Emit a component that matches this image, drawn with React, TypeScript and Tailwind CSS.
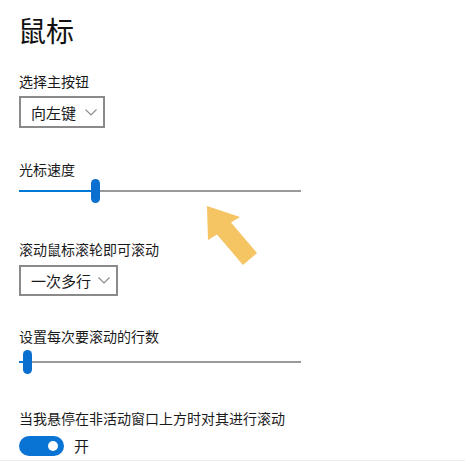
const font = { fontFamily: '"Noto Sans CJK SC", "Microsoft YaHei", sans-serif' }

function Chevron() {
  return (
    <svg width="12" height="7" viewBox="0 0 12 7" fill="none">
      <path d="M0.5 0.5L6 6L11.5 0.5" stroke="#8a8a8a" strokeWidth="1.1" />
    </svg>
  )
}

function Dropdown({ label, width }: { label: string; width: string }) {
  return (
    <div
      className={`flex items-center justify-between border-2 border-[#8a8a8a] bg-white pl-[10px] pr-[6px] text-[15px] leading-none text-[#1a1a1a] ${width}`}
    >
      <span>{label}</span>
      <Chevron />
    </div>
  )
}

function Slider({ pos }: { pos: number }) {
  // pos = thumb centre, in px from the track's left edge
  return (
    <div className="relative h-[24px] w-[282px]">
      <div className="absolute left-0 right-0 top-[11px] h-[2px] bg-[#9a9a9a]" />
      <div className="absolute left-0 top-[11px] h-[2px] bg-[#0078d7]" style={{ width: pos }} />
      <div
        className="absolute top-0 h-[24px] w-[9px] rounded-full bg-[#0a6fce]"
        style={{ left: pos - 4 }}
      />
    </div>
  )
}

export default function App() {
  return (
    <div className="relative min-h-screen w-[465px] overflow-hidden bg-white text-[#1a1a1a]" style={font}>
      <div className="flex flex-col pl-[19px] pt-[10px]">
        <h1 className="-ml-[1px] text-[28px] font-normal leading-[40px] text-[#111]">鼠标</h1>

        <p className="mt-[21px] text-[14px] leading-[20px]">选择主按钮</p>
        <div className="mt-[5px] flex">
          <Dropdown label="向左键" width="h-[32px] w-[86px]" />
        </div>

        <p className="mt-[31px] text-[14px] leading-[20px]">光标速度</p>
        <Slider pos={76} />

        <p className="mt-[36px] text-[14px] leading-[20px]">滚动鼠标滚轮即可滚动</p>
        <div className="mt-[6px] flex">
          <Dropdown label="一次多行" width="h-[31px] w-[99px]" />
        </div>

        <p className="mt-[30px] text-[14px] leading-[20px]">设置每次要滚动的行数</p>
        <div className="mt-[4px]">
          <Slider pos={8} />
        </div>

        <p className="mt-[34px] text-[14px] leading-[20px]">当我悬停在非活动窗口上方时对其进行滚动</p>
        <div className="mt-[8px] flex items-center gap-[10px]">
          <div className="flex h-[20px] w-[45px] items-center justify-end rounded-full bg-[#0a74d4] pr-[6px]">
            <div className="h-[10px] w-[10px] rounded-full bg-white" />
          </div>
          <span className="text-[15px] leading-[20px]">开</span>
        </div>
      </div>
      <div className="mt-[4px] h-px w-full bg-[#ececec]" />

      {/* yellow pointer arrow drawn over the page */}
      <svg className="absolute left-0 top-0" width="465" height="466" viewBox="0 0 465 466">
        <polygon
          points="207,206 240,217 231,222.5 257,253 243,265 217,234.5 208,240"
          fill="#f5c463"
        />
      </svg>
    </div>
  )
}
